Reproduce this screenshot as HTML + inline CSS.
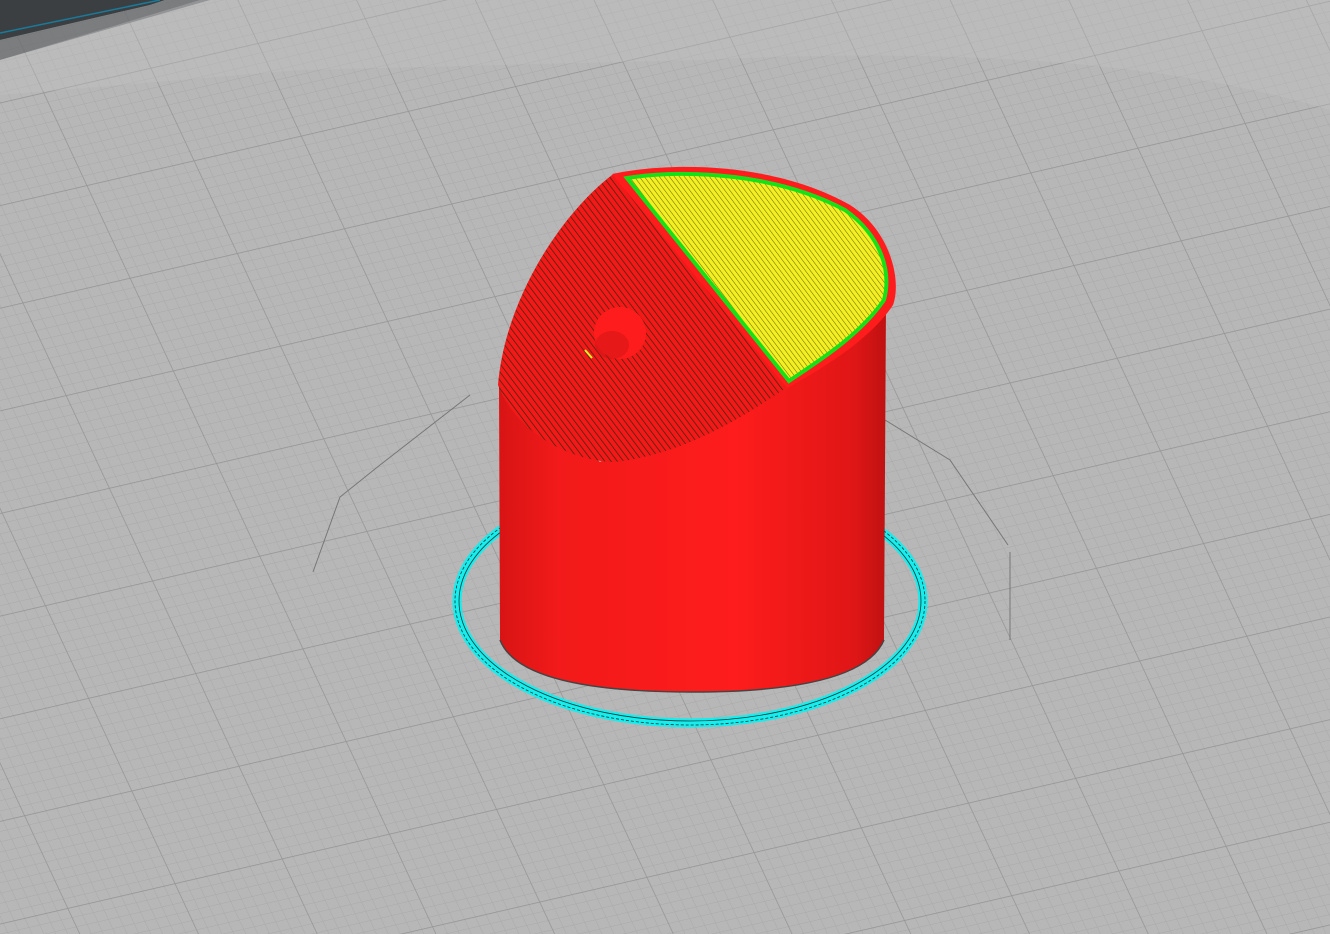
<!DOCTYPE html>
<html><head><meta charset="utf-8"><style>
html,body{margin:0;padding:0;width:1330px;height:934px;overflow:hidden;background:#b7b7b7}
svg{display:block}
</style></head><body>
<svg width="1330" height="934" viewBox="0 0 1330 934" xmlns="http://www.w3.org/2000/svg">
<defs>
<pattern id="fine" width="11" height="10" patternUnits="userSpaceOnUse" patternTransform="rotate(-13) skewX(12)">
<rect width="11" height="10" fill="#b7b7b7"/>
<path d="M0 0H11M0 0V10" stroke="#a9a9a9" stroke-width="1"/>
</pattern>
<pattern id="major" width="110" height="100" patternUnits="userSpaceOnUse" patternTransform="rotate(-13) skewX(12)">
<path d="M0 0H110M0 0V100" stroke="#949494" stroke-width="1.4" fill="none"/>
</pattern>
<pattern id="hatchR" width="5" height="5" patternUnits="userSpaceOnUse" patternTransform="rotate(-37)">
<rect width="5" height="5" fill="#f41818"/>
<path d="M0 0V5" stroke="#3a2a10" stroke-width="1.5"/>
</pattern>
<pattern id="hatchY" width="4" height="4" patternUnits="userSpaceOnUse" patternTransform="rotate(-37)">
<rect width="4" height="4" fill="#f4f020"/>
<path d="M0 0V4" stroke="#6a6a20" stroke-width="1.1"/>
</pattern>
<linearGradient id="body" x1="0" x2="1">
<stop offset="0" stop-color="#d81414"/><stop offset="0.15" stop-color="#f21a1a"/>
<stop offset="0.6" stop-color="#fe1c1c"/><stop offset="0.9" stop-color="#e01616"/><stop offset="1" stop-color="#b81010"/>
</linearGradient>
</defs>
<rect width="1330" height="934" fill="url(#fine)"/>
<rect width="1330" height="934" fill="url(#major)"/>
<path d="M0 0H165L150 5 0 40Z" fill="#3b3f42"/>
<path d="M0 40L150 5 165 0H210L0 60Z" fill="#6c6e70" opacity="0.8"/>
<path d="M0 33L160 0" stroke="#1a7a9a" stroke-width="1.5"/>
<path d="M200 0H1330V110Q1100 40 700 60L300 70 0 95V60Z" fill="#c4c4c4" opacity="0.35"/>
<path d="M313 572L340 497 380 465 470 395 M885 420 L950 460 1008 545 M1010 552 L1010 640" stroke="#777" stroke-width="1" fill="none"/>
<ellipse cx="690" cy="601" rx="233" ry="122" fill="none" stroke="#18ecec" stroke-width="9"/>
<ellipse cx="690" cy="601" rx="231" ry="120" fill="none" stroke="#0a3a3a" stroke-width="0.8"/>
<ellipse cx="690" cy="601" rx="235" ry="124" fill="none" stroke="#0a3a3a" stroke-width="0.8" stroke-dasharray="3 2"/>
<path d="M499 380 L500 640 Q520 692 692 692 Q862 692 884 640 L886 300 L893 300 L850 300 L760 370 L600 462Z" fill="url(#body)"/>
<path d="M500 640 Q520 692 692 692 Q862 692 884 640" fill="none" stroke="#444" stroke-width="1.5"/>
<path d="M612 175 C560 215 505 300 498 385 C520 440 580 462 615 462 C680 455 740 420 787 387 L625 175 Z" fill="url(#hatchR)"/>
<path d="M612 174 C680 160 780 165 850 205 C890 230 902 280 893 305 C870 340 820 370 787 388 Z" fill="#ff1c1c"/>
<path d="M627 178 C690 168 780 175 845 210 C880 235 892 270 884 300 C860 335 820 360 789 381 Z" fill="url(#hatchY)" stroke="#18e018" stroke-width="4"/>
<ellipse cx="620" cy="333" rx="26" ry="26" fill="#ff1c1c"/>
<ellipse cx="612" cy="345" rx="17" ry="14" fill="#c81414" opacity="0.45"/>
<path d="M585 350 L592 358" stroke="#f0f020" stroke-width="2"/>
</svg>
</body></html>
